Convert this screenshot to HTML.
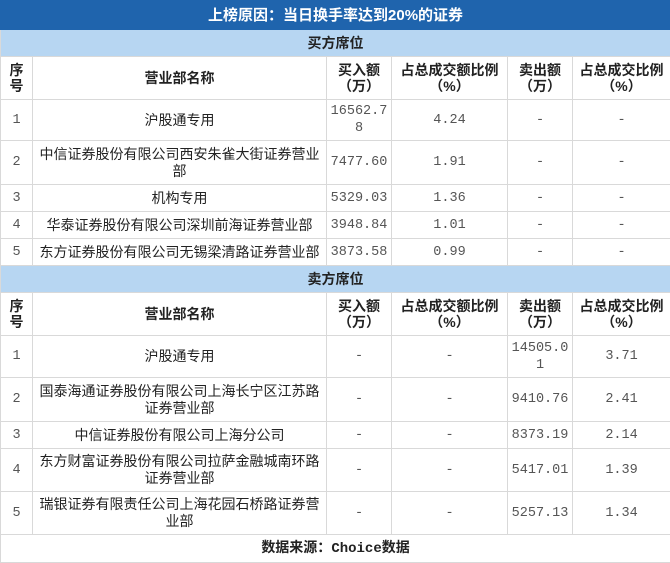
<!DOCTYPE html>
<html><head><meta charset="utf-8"><style>
body{margin:0;background:#fff;width:670px;height:563px;overflow:hidden}
table{border-collapse:collapse;width:670px;table-layout:fixed;font-family:"Liberation Serif","Noto Serif CJK SC","Noto Sans CJK SC",serif;font-size:14px;color:#222}
td{border:1px solid #d9d9d9;text-align:center;padding:0 2px;line-height:17px;overflow:hidden;word-break:break-all}
.t{background:#1f64ad;color:#fff;font-weight:bold;font-size:15px;font-family:"Liberation Sans","Noto Sans CJK SC",sans-serif;border-color:#1f64ad}
.s{background:#b7d6f2;font-weight:bold;font-family:"Liberation Sans","Noto Sans CJK SC",sans-serif}
.h td{font-weight:bold;font-family:"Liberation Sans","Noto Sans CJK SC",sans-serif;line-height:16px}
.n{font-family:"Liberation Mono","Noto Sans CJK SC",monospace;color:#555;font-size:13.5px}
.c{font-family:"Liberation Sans","Noto Sans CJK SC",sans-serif}
.f{font-weight:bold;font-family:"Liberation Sans","Noto Sans CJK SC",sans-serif}
.f span{font-family:"Liberation Mono",monospace}
</style></head><body>
<table>
<colgroup><col style="width:32px"><col style="width:294px"><col style="width:65px"><col style="width:116px"><col style="width:65px"><col style="width:98px"></colgroup>
<tr style="height:29px"><td colspan="6" class="t">上榜原因：当日换手率达到20%的证券</td></tr>
<tr style="height:27px"><td colspan="6" class="s">买方席位</td></tr>
<tr class="h" style="height:43px"><td>序号</td><td>营业部名称</td><td>买入额（万）</td><td>占总成交额比例（%）</td><td>卖出额（万）</td><td>占总成交比例（%）</td></tr>
<tr style="height:41px"><td class="n">1</td><td class="c">沪股通专用</td><td class="n">16562.78</td><td class="n">4.24</td><td class="n">-</td><td class="n">-</td></tr>
<tr style="height:44px"><td class="n">2</td><td class="c">中信证券股份有限公司西安朱雀大街证券营业部</td><td class="n">7477.60</td><td class="n">1.91</td><td class="n">-</td><td class="n">-</td></tr>
<tr style="height:27px"><td class="n">3</td><td class="c">机构专用</td><td class="n">5329.03</td><td class="n">1.36</td><td class="n">-</td><td class="n">-</td></tr>
<tr style="height:27px"><td class="n">4</td><td class="c">华泰证券股份有限公司深圳前海证券营业部</td><td class="n">3948.84</td><td class="n">1.01</td><td class="n">-</td><td class="n">-</td></tr>
<tr style="height:27px"><td class="n">5</td><td class="c">东方证券股份有限公司无锡梁清路证券营业部</td><td class="n">3873.58</td><td class="n">0.99</td><td class="n">-</td><td class="n">-</td></tr>
<tr style="height:27px"><td colspan="6" class="s">卖方席位</td></tr>
<tr class="h" style="height:43px"><td>序号</td><td>营业部名称</td><td>买入额（万）</td><td>占总成交额比例（%）</td><td>卖出额（万）</td><td>占总成交比例（%）</td></tr>
<tr style="height:42px"><td class="n">1</td><td class="c">沪股通专用</td><td class="n">-</td><td class="n">-</td><td class="n">14505.01</td><td class="n">3.71</td></tr>
<tr style="height:44px"><td class="n">2</td><td class="c">国泰海通证券股份有限公司上海长宁区江苏路证券营业部</td><td class="n">-</td><td class="n">-</td><td class="n">9410.76</td><td class="n">2.41</td></tr>
<tr style="height:27px"><td class="n">3</td><td class="c">中信证券股份有限公司上海分公司</td><td class="n">-</td><td class="n">-</td><td class="n">8373.19</td><td class="n">2.14</td></tr>
<tr style="height:43px"><td class="n">4</td><td class="c">东方财富证券股份有限公司拉萨金融城南环路证券营业部</td><td class="n">-</td><td class="n">-</td><td class="n">5417.01</td><td class="n">1.39</td></tr>
<tr style="height:43px"><td class="n">5</td><td class="c">瑞银证券有限责任公司上海花园石桥路证券营业部</td><td class="n">-</td><td class="n">-</td><td class="n">5257.13</td><td class="n">1.34</td></tr>
<tr style="height:28px"><td colspan="6" class="f">数据来源：<span>Choice</span>数据</td></tr>
</table>
</body></html>
